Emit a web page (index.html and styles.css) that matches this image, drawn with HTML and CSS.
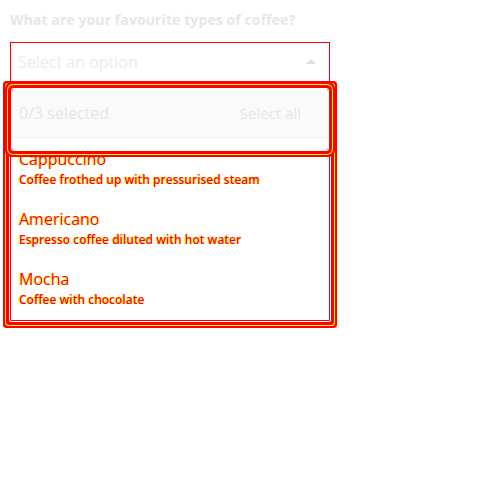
FILE: index.html
```html
<!DOCTYPE html>
<html lang="en">
<head>
    <meta charset="UTF-8">
    <meta name="viewport" content="width=device-width, initial-scale=1.0">
    <title>Coffee multi select</title>
    <link rel="stylesheet" href="styles.css">
</head>
<body>
    <div class="field">
        <label class="field-label" for="coffee">What are your favourite types of coffee?</label>
        <div class="select" id="coffee">
            <span class="placeholder">Select an option</span>
            <span class="caret"></span>
        </div>
        <div class="panel">
            <div class="panel-head">
                <span class="count">0/3 selected</span>
                <span class="select-all">Select all</span>
            </div>
            <ul class="options">
                <li class="option">
                    <div class="option-title">Cappuccino</div>
                    <div class="option-desc">Coffee frothed up with pressurised steam</div>
                </li>
                <li class="option">
                    <div class="option-title">Americano</div>
                    <div class="option-desc">Espresso coffee diluted with hot water</div>
                </li>
                <li class="option">
                    <div class="option-title">Mocha</div>
                    <div class="option-desc">Coffee with chocolate</div>
                </li>
            </ul>
        </div>
    </div>
</body>
</html>
```

FILE: styles.css
```css
body {
    margin: 0;
    font-family: "Open Sans", "Noto Sans", sans-serif;
    background: #fff;
}
.field {
    width: 320px;
    padding: 10px;
}
.field-label {
    display: block;
    font-size: 14px;
    line-height: 20px;
    font-weight: bold;
    letter-spacing: 0.1px;
    color: #e6e6e6;
}
.select {
    margin-top: 12px;
    height: 40px;
    box-sizing: border-box;
    border: 1px solid red;
    display: flex;
    align-items: center;
    justify-content: space-between;
    padding: 0 13px 0 7px;
}
.placeholder {
    font-size: 16px;
    color: #ebebeb;
}
.caret {
    width: 0;
    height: 0;
    border-left: 5px solid transparent;
    border-right: 5px solid transparent;
    border-bottom: 5px solid #e0e0e0;
    margin-bottom: 2px;
}
.panel {
    position: relative;
    margin-top: 6px;
    padding-bottom: 2px;
    border: 1px solid red;
    box-shadow: 0 0 0 1px #fff, 0 0 0 4px red, 0 0 0 5px #ff0, 0 0 0 7px red;
    border-radius: 1px;
}
.panel-head {
    height: 48px;
    background: #fafafa;
    border-bottom: 1px solid #f0f0f0;
    display: flex;
    align-items: center;
    justify-content: space-between;
    padding: 0 28px 0 8px;
}
.panel-head::after {
    content: "";
    position: absolute;
    left: 1px;
    right: 1px;
    top: 0;
    height: 61px;
    box-shadow: 0 0 0 1px #fff, 0 0 0 4px red, 0 0 0 5px #ff0, 0 0 0 7px red;
    border-radius: 2px;
}
.count {
    font-size: 16px;
    color: #e6e6e6;
}
.select-all {
    font-size: 15px;
    color: #e6e6e6;
}
.options {
    list-style: none;
    margin: 0;
    padding: 0;
}
.option {
    height: 60px;
    box-sizing: border-box;
    padding: 10px 8px 8px;
    color: red;
    text-shadow: -1px 0 0 #ff0;
}
.option-title {
    font-size: 16px;
    line-height: 22px;
}
.option-desc {
    font-size: 12px;
    line-height: 20px;
    font-weight: 600;
}
```
